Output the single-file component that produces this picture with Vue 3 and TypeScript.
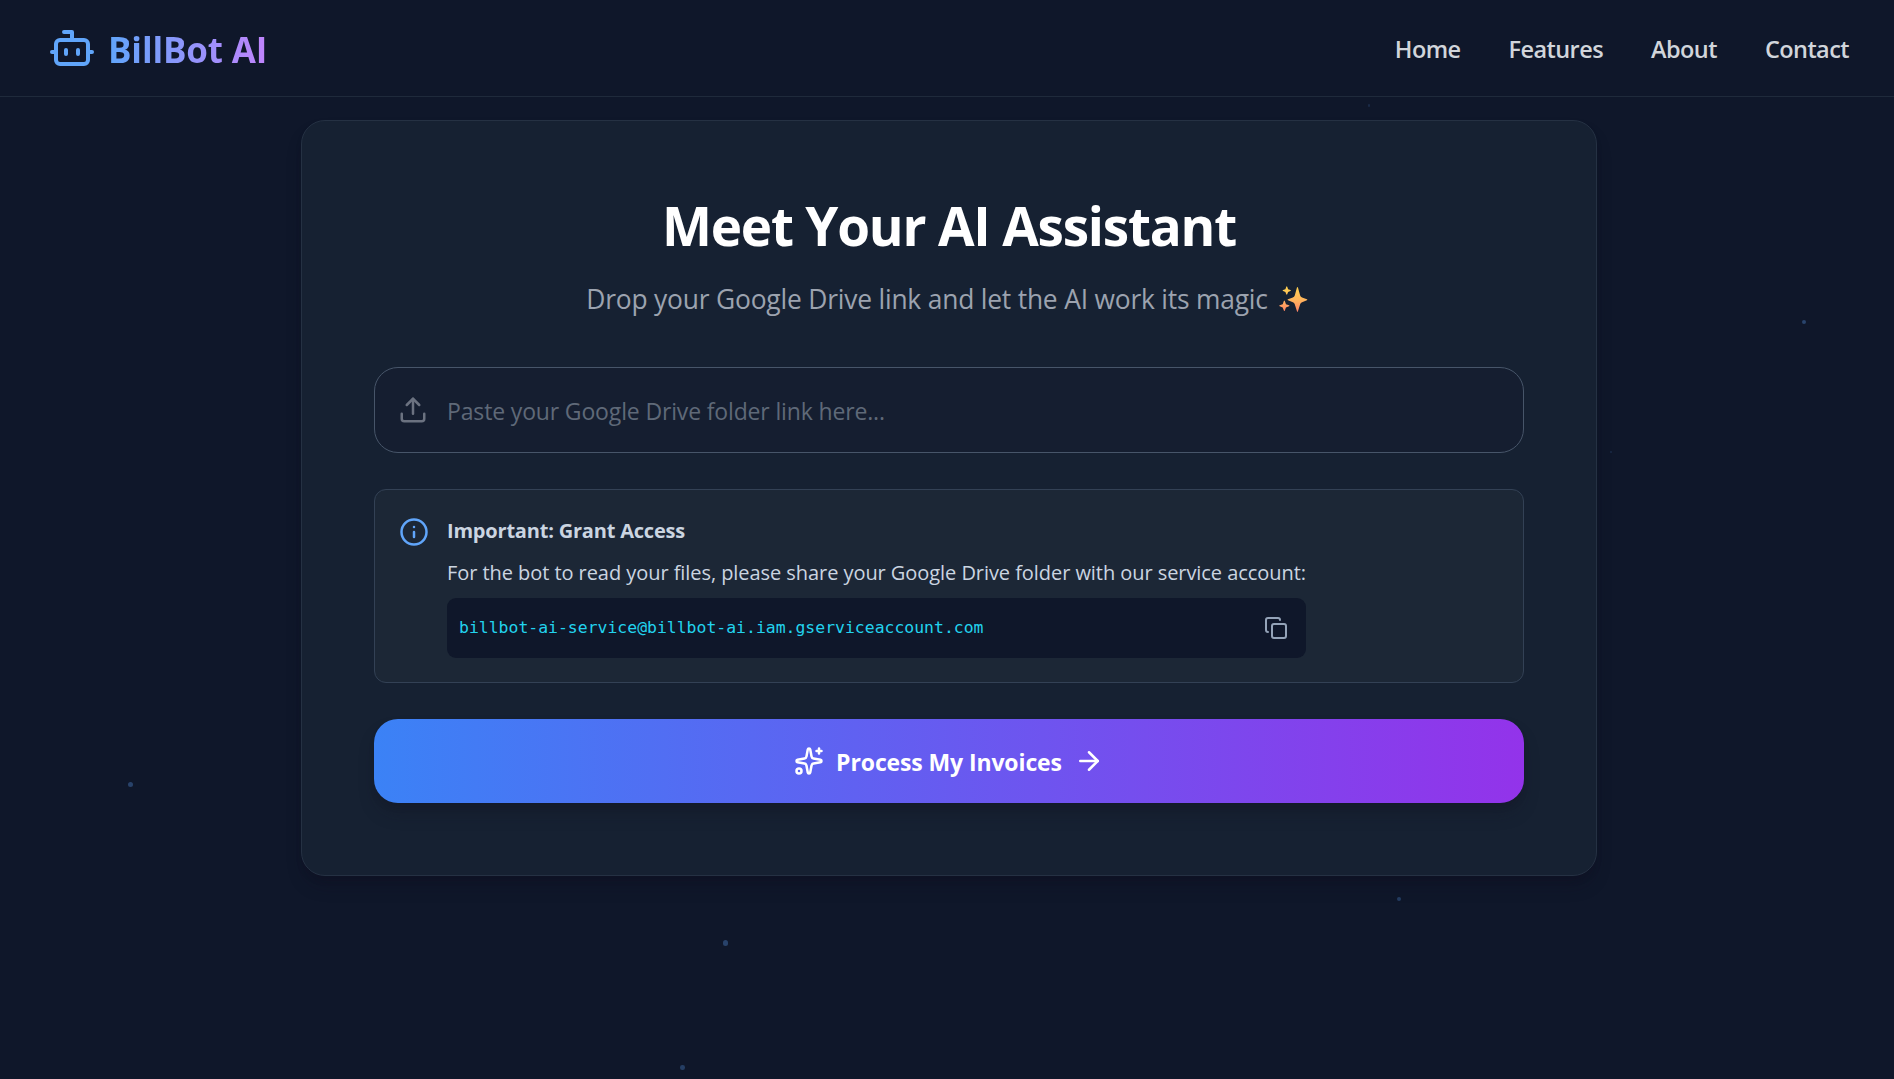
<script setup lang="ts">
interface Particle {
  x: number
  y: number
  size: number
  opacity: number
}

const links: string[] = ['Home', 'Features', 'About', 'Contact']
const serviceAccount = 'billbot-ai-service@billbot-ai.iam.gserviceaccount.com'

const particles: Particle[] = [
  { x: 130.3, y: 784.3, size: 5.5, opacity: 0.31 },
  { x: 725.7, y: 943, size: 5.5, opacity: 0.31 },
  { x: 682.7, y: 1067.6, size: 4.6, opacity: 0.28 },
  { x: 1399, y: 898.6, size: 4, opacity: 0.26 },
  { x: 1804, y: 321.6, size: 4, opacity: 0.32 },
  { x: 1369, y: 105.7, size: 2.6, opacity: 0.14 },
  { x: 1611, y: 451.8, size: 2.6, opacity: 0.14 },
]
</script>

<template>
  <div class="page">
    <span
      v-for="(p, i) in particles"
      :key="i"
      class="particle"
      :style="{
        left: `${p.x - p.size / 2}px`,
        top: `${p.y - p.size / 2}px`,
        width: `${p.size}px`,
        height: `${p.size}px`,
        opacity: p.opacity,
      }"
    />

    <header class="header">
      <a class="brand">
        <svg class="icon icon-bot" viewBox="0 0 24 24">
          <path d="M12 8V4H8" />
          <rect width="16" height="12" x="4" y="8" rx="2" />
          <path d="M2 14h2" />
          <path d="M20 14h2" />
          <path d="M15 13v2" />
          <path d="M9 13v2" />
        </svg>
        <span class="brand-name">BillBot AI</span>
      </a>
      <nav class="nav">
        <a v-for="link in links" :key="link" class="nav-link">{{ link }}</a>
      </nav>
    </header>

    <main class="main">
      <section class="card">
        <h1 class="title">Meet Your AI Assistant</h1>
        <p class="subtitle">
          <span>Drop your Google Drive link and let the AI work its magic</span>
          <svg class="sparkle" viewBox="0 0 30 28">
            <defs>
              <linearGradient id="glow" x1="0" y1="0" x2="0" y2="28" gradientUnits="userSpaceOnUse">
                <stop offset="0" stop-color="#ffd34f" />
                <stop offset="0.5" stop-color="#ffb65c" />
                <stop offset="1" stop-color="#ff7d67" />
              </linearGradient>
            </defs>
            <g fill="url(#glow)">
              <path d="M18.6 1.6q.5-1.3 1-0l2.3 8.2q.5 1.5 2 2l5 1.9q1.1.6 0 1.200l-5 1.900q-1.500.5-2 2l-2.300 7.500q-.5 1.300-1 0l-2.300-7.500q-.5-1.500-2-2l-5-1.900q-1.100-.6 0-1.200l5-1.900q1.500-.5 2-2z" />
              <path d="M7.500.8q.5-1 1 0l.9 2.500 2.400.9q1 .5 0 1l-2.400.9-.9 2.500q-.5 1-1 0l-.9-2.500-2.400-.9q-1-.5 0-1l2.400-.9z" />
              <path d="M5 15.500q.5-1.100 1 0l1.200 3.300 3.100 1.200q1 .5 0 1l-3.100 1.200-1.200 3.300q-.5 1.100-1 0l-1.200-3.300-3.100-1.200q-1-.5 0-1l3.100-1.200z" />
            </g>
          </svg>
        </p>

        <div class="field">
          <svg class="icon icon-upload" viewBox="0 0 24 24">
            <path d="M21 15v4a2 2 0 0 1-2 2H5a2 2 0 0 1-2-2v-4" />
            <path d="m17 8-5-5-5 5" />
            <path d="M12 3v12" />
          </svg>
          <span class="placeholder">Paste your Google Drive folder link here...</span>
        </div>

        <div class="notice">
          <svg class="icon icon-info" viewBox="0 0 24 24">
            <circle cx="12" cy="12" r="10" />
            <path d="M12 16v-4" />
            <path d="M12 8h.01" />
          </svg>
          <div class="notice-body">
            <h2 class="notice-title">Important: Grant Access</h2>
            <p class="notice-text">
              <span>For the bot to read your files, please share your Google Drive folder with our service account:</span>
            </p>
            <div class="account">
              <code>{{ serviceAccount }}</code>
              <svg class="icon icon-copy" viewBox="0 0 24 24">
                <rect width="14" height="14" x="8" y="8" rx="2" />
                <path d="M4 16c-1.100 0-2-.9-2-2V4c0-1.100.9-2 2-2h10c1.100 0 2 .9 2 2" />
              </svg>
            </div>
          </div>
        </div>

        <button class="submit" type="button">
          <svg class="icon icon-action" viewBox="0 0 24 24">
            <path d="M11.017 2.814a1 1 0 0 1 1.966 0l1.051 5.558a2 2 0 0 0 1.594 1.594l5.558 1.051a1 1 0 0 1 0 1.966l-5.558 1.051a2 2 0 0 0-1.594 1.594l-1.051 5.558a1 1 0 0 1-1.966 0l-1.051-5.558a2 2 0 0 0-1.594-1.594l-5.558-1.051a1 1 0 0 1 0-1.966l5.558-1.051a2 2 0 0 0 1.594-1.594z" />
            <path d="M20 2v4" />
            <path d="M22 4h-4" />
            <circle cx="4" cy="20" r="2" />
          </svg>
          <span class="submit-label">Process My Invoices</span>
          <svg class="icon icon-action" viewBox="0 0 24 24">
            <path d="M5 12h14" />
            <path d="m12 5 7 7-7 7" />
          </svg>
        </button>
      </section>
    </main>
  </div>
</template>

<style>
body {
  background: #0f172a;
}
</style>

<style scoped>
.page {
  position: relative;
  box-sizing: border-box;
  height: 1079px;
  overflow: hidden;
  background: #0f172a;
  font-family: 'Open Sans', 'Noto Sans', sans-serif;
  white-space: nowrap;
}

.particle {
  position: absolute;
  border-radius: 50%;
  background: #60a5fa;
}

.icon {
  flex: none;
  fill: none;
  stroke: currentColor;
  stroke-width: 2;
  stroke-linecap: round;
  stroke-linejoin: round;
}

.header {
  box-sizing: border-box;
  height: 97px;
  padding: 0 45px 0 48px;
  display: flex;
  align-items: center;
  justify-content: space-between;
  border-bottom: 1px solid #1f2a3b;
}

.brand {
  display: flex;
  align-items: center;
  gap: 12px;
}

.icon-bot {
  width: 48px;
  height: 48px;
  color: #60a5fa;
}

.brand-name {
  font-size: 35px;
  font-weight: 700;
  line-height: 48px;
  letter-spacing: -0.15px;
  padding-top: 3px;
  color: transparent;
  background: linear-gradient(90deg, #60a5fa, #c084fc);
  background-clip: text;
  -webkit-background-clip: text;
}

.nav {
  display: flex;
  gap: 48px;
}

.nav-link {
  font-size: 23.5px;
  font-weight: 600;
  line-height: 36px;
  letter-spacing: -0.57px;
  padding-top: 2px;
  color: #d1d5db;
}

.main {
  display: flex;
  padding: 23px 0 0 301px;
}

.card {
  box-sizing: border-box;
  width: 1296px;
  height: 756px;
  padding: 72px;
  display: flex;
  flex-direction: column;
  border: 1px solid #253143;
  border-radius: 24px;
  background: #162132;
  box-shadow: 0 12px 18px -4px rgba(15, 14, 30, 0.3), 0 5px 9px -4px rgba(15, 14, 30, 0.3);
}

.title {
  margin: -1px 0 0;
  text-align: center;
  font-size: 53px;
  font-weight: 700;
  line-height: 68px;
  letter-spacing: -1.2px;
  color: #fff;
}

.subtitle {
  margin: 21px 0 0;
  height: 36px;
  display: flex;
  align-items: center;
  justify-content: center;
  gap: 11px;
  font-size: 26.4px;
  line-height: 36px;
  letter-spacing: -0.2px;
  color: #9ca3af;
}

.sparkle {
  width: 29px;
  height: 27px;
  margin-right: 4px;
}

.field {
  box-sizing: border-box;
  height: 86px;
  margin-top: 50px;
  padding: 0 23px;
  display: flex;
  align-items: center;
  gap: 19px;
  border: 1px solid #475569;
  border-radius: 24px;
  background: #151e30;
}

.icon-upload {
  width: 30px;
  height: 30px;
  color: #6b7280;
}

.placeholder {
  font-size: 23px;
  line-height: 32px;
  letter-spacing: -0.15px;
  padding-top: 2px;
  color: #5f6978;
}

.notice {
  box-sizing: border-box;
  height: 194px;
  margin-top: 36px;
  padding: 23px 24px;
  display: flex;
  align-items: flex-start;
  gap: 18px;
  border: 1px solid #334155;
  border-radius: 12px;
  background: #1c2736;
}

.icon-info {
  width: 30px;
  height: 30px;
  margin-top: 4px;
  color: #60a5fa;
}

.notice-body {
  width: 859px;
}

.notice-title,
.notice-text {
  margin: 0;
  font-size: 20px;
  line-height: 36px;
  color: #cbd5e1;
}

.notice-title {
  font-weight: 700;
  letter-spacing: -0.2px;
}

.notice-text {
  margin-top: 6px;
  font-weight: 400;
  letter-spacing: -0.06px;
}

.account {
  box-sizing: border-box;
  height: 60px;
  margin-top: 7px;
  padding: 0 18px 0 12px;
  display: flex;
  align-items: center;
  justify-content: space-between;
  border-radius: 9px;
  background: #0f172a;
}

.account code {
  font-family: 'DejaVu Sans Mono', monospace;
  font-size: 16.44px;
  line-height: 24px;
  color: #22d3ee;
}

.icon-copy {
  width: 24px;
  height: 24px;
  color: #94a3b8;
}

.submit {
  height: 84px;
  margin: 36px 0 0;
  padding: 0;
  display: flex;
  flex: none;
  align-items: center;
  justify-content: center;
  gap: 12px;
  border: 0;
  border-radius: 24px;
  background: linear-gradient(90deg, #3b82f6, #9333ea);
  box-shadow: 0 12px 18px -4px rgba(20, 20, 34, 0.35), 0 5px 9px -4px rgba(20, 20, 34, 0.3);
  color: #fff;
  font-family: inherit;
}

.icon-action {
  width: 30px;
  height: 30px;
}

.submit-label {
  font-size: 23px;
  font-weight: 700;
  line-height: 32px;
  letter-spacing: -0.12px;
  padding-top: 2px;
}
</style>
